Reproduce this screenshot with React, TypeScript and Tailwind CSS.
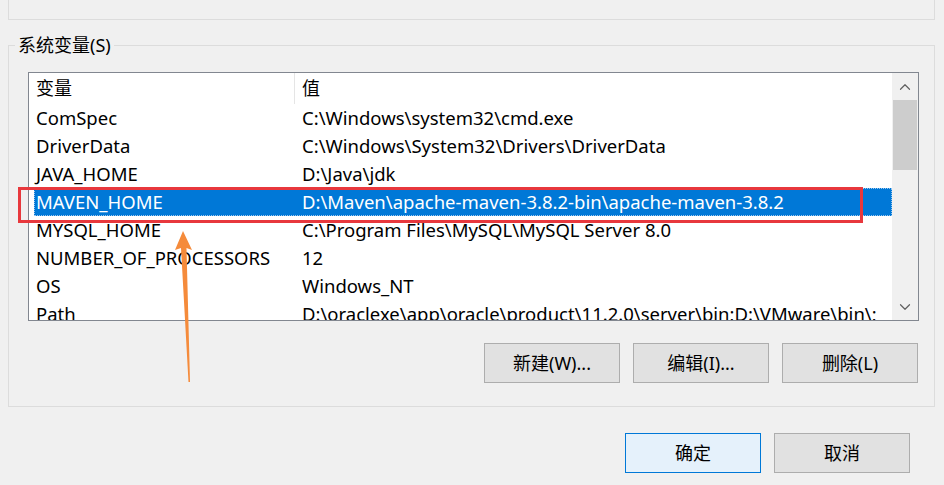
import { ChevronUp, ChevronDown } from "lucide-react";

const rows = [
    { name: "ComSpec", value: "C:\\Windows\\system32\\cmd.exe" },
    { name: "DriverData", value: "C:\\Windows\\System32\\Drivers\\DriverData" },
    { name: "JAVA_HOME", value: "D:\\Java\\jdk" },
    { name: "MAVEN_HOME", value: "D:\\Maven\\apache-maven-3.8.2-bin\\apache-maven-3.8.2", selected: true },
    { name: "MYSQL_HOME", value: "C:\\Program Files\\MySQL\\MySQL Server 8.0" },
    { name: "NUMBER_OF_PROCESSORS", value: "12" },
    { name: "OS", value: "Windows_NT" },
    { name: "Path", value: "D:\\oraclexe\\app\\oracle\\product\\11.2.0\\server\\bin;D:\\VMware\\bin\\;" },
];

function WinButton({ label, primary }: { label: string; primary?: boolean }) {
    return (
        <button
            className={
                primary
                    ? "w-[136px] h-[40px] bg-[#e5f1fb] border border-[#0078d7] text-[18px] text-black"
                    : "w-[136px] h-[40px] bg-[#e1e1e1] border border-[#adadad] text-[18px] text-black"
            }
        >
            {label}
        </button>
    );
}

export default function App() {
    return (
        <div
            className="relative w-[944px] h-[485px] overflow-hidden bg-[#f0f0f0] text-black"
            style={{ fontFamily: '"Noto Sans", "Noto Sans CJK SC", sans-serif' }}
        >
            {/* bottom of the previous group box */}
            <div className="ml-[8px] w-[927px] h-[20px] border-l border-r border-b border-[#dcdcdc]" />

            {/* system variables group */}
            <div className="relative ml-[8px] mt-[25px] w-[927px] h-[362px] border border-[#dcdcdc]">
                <span className="absolute left-[6px] top-[-13px] px-[3px] bg-[#f0f0f0] text-[18px] leading-[24px]">
                    系统变量(S)
                </span>

                <div className="ml-[19px] mt-[26px] w-[891px] h-[249px] border border-[#828790] bg-white flex">
                    <div className="flex-1 overflow-hidden">
                        {/* header */}
                        <div className="flex h-[31px] items-center">
                            <div className="w-[266px] h-full flex items-center pl-[7px] border-r border-[#e5e5e5] text-[18px]">
                                变量
                            </div>
                            <div className="flex-1 pl-[7px] text-[18px]">值</div>
                        </div>
                        {rows.map((r) => (
                            <div
                                key={r.name}
                                className={
                                    r.selected
                                        ? "ml-[5px] flex h-[28px] items-center bg-[#0078d7] text-white outline-1 outline-dotted outline-[#9cc7ee] -outline-offset-1"
                                        : "ml-[5px] flex h-[28px] items-center"
                                }
                            >
                                <div className="w-[261px] pl-[2px] text-[18.5px] whitespace-nowrap">{r.name}</div>
                                <div className="flex-1 pl-[7px] text-[18.5px] whitespace-nowrap">{r.value}</div>
                            </div>
                        ))}
                    </div>
                    {/* scrollbar */}
                    <div className="w-[26px] h-full bg-[#f0f0f0] flex flex-col items-center">
                        <div className="h-[27px] flex items-center justify-center">
                            <ChevronUp size={18} strokeWidth={1.6} color="#606060" />
                        </div>
                        <div className="w-[24px] h-[70px] bg-[#cdcdcd]" />
                        <div className="flex-1" />
                        <div className="h-[27px] flex items-center justify-center">
                            <ChevronDown size={18} strokeWidth={1.6} color="#606060" />
                        </div>
                    </div>
                </div>

                <div className="mt-[22px] mr-[16px] flex justify-end gap-[13px]">
                    <WinButton label="新建(W)..." />
                    <WinButton label="编辑(I)..." />
                    <WinButton label="删除(L)" />
                </div>
            </div>

            <div className="mt-[26px] mr-[34px] flex justify-end gap-[13px]">
                <WinButton label="确定" primary />
                <WinButton label="取消" />
            </div>

            {/* annotation overlays */}
            <div className="absolute left-[18px] top-[187px] w-[845px] h-[36px] border-[3px] border-[#e8383d]" />
            <svg className="absolute left-0 top-0" width="944" height="485">
                <polygon
                    points="183,231 175,250 181,248 188.5,382 190,382 186.5,248 192,250"
                    fill="#f58b3b"
                />
            </svg>
        </div>
    );
}
